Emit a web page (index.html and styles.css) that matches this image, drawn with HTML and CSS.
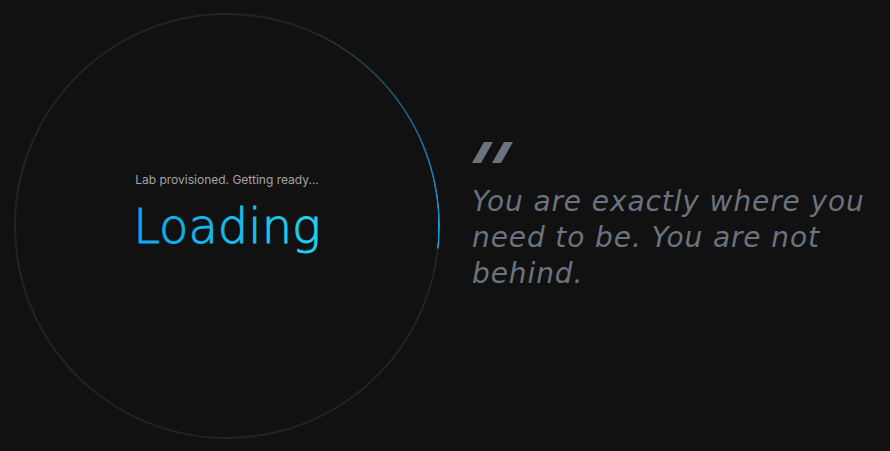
FILE: index.html
```html
<!DOCTYPE html>
<html lang="en">
<head>
<meta charset="utf-8">
<title>Loading</title>
<link rel="stylesheet" href="styles.css">
</head>
<body>
<main class="page">
  <section class="ring">
    <div class="center">
      <p class="status">Lab provisioned. Getting ready...</p>
      <svg class="loading" width="192" height="58" viewBox="0 0 192 58">
        <defs>
          <linearGradient id="lg" x1="0" y1="0" x2="1" y2="0">
            <stop offset="0" stop-color="#0ea5e9"/>
            <stop offset="1" stop-color="#22d3ee"/>
          </linearGradient>
        </defs>
        <text x="96" y="45" text-anchor="middle" class="loading-text">Loading</text>
      </svg>
    </div>
  </section>
  <section class="quote">
    <svg class="qmark" width="42" height="22" viewBox="0 0 42 22" aria-hidden="true">
      <polygon points="12,0 21,0 9,21 0,21" fill="#6b7280"/>
      <polygon points="32,0 41,0 29,21 20,21" fill="#6b7280"/>
    </svg>
    <p class="qtext">You are exactly where you need to be. You are not behind.</p>
  </section>
</main>
</body>
</html>
```

FILE: styles.css
```css
html, body {
  margin: 0;
  padding: 0;
  background: #111111;
}
.page {
  height: 451px;
  display: flex;
  align-items: center;
  padding-left: 14px;
  gap: 32px;
  box-sizing: border-box;
}
.ring {
  position: relative;
  flex: 0 0 auto;
  width: 426px;
  height: 426px;
  border-radius: 50%;
  border: 2px solid #232323;
  box-sizing: border-box;
  display: flex;
  align-items: center;
  justify-content: center;
}
.ring::before {
  content: "";
  position: absolute;
  inset: -2px;
  border-radius: 50%;
  background: conic-gradient(from 0deg, rgba(14,165,233,0) 0deg, rgba(14,165,233,0) 22deg, rgba(14,165,233,0.3) 45deg, #0ea5e9 96deg, rgba(14,165,233,0) 96.2deg);
  -webkit-mask: radial-gradient(farthest-side, transparent calc(100% - 2px), #000 calc(100% - 1.5px));
  mask: radial-gradient(farthest-side, transparent calc(100% - 2px), #000 calc(100% - 1.5px));
}
.center {
  display: flex;
  flex-direction: column;
  align-items: center;
  padding-bottom: 22px;
}
.status {
  margin: 0;
  font-family: Inter, "Liberation Sans", sans-serif;
  font-size: 12px;
  line-height: 14px;
  color: #a3a3a3;
}
.loading {
  display: block;
  margin-top: 11px;
  overflow: visible;
}
.loading-text {
  font-family: "DejaVu Sans", sans-serif;
  font-weight: 200;
  font-size: 48px;
  fill: url(#lg);
  stroke: url(#lg);
  stroke-width: 0.9px;
}
.quote {
  width: 400px;
  display: flex;
  flex-direction: column;
  margin-bottom: 17px;
}
.qmark {
  display: block;
}
.qtext {
  margin: 20px 0 0;
  font-family: "DejaVu Sans", sans-serif;
  font-style: italic;
  font-weight: 400;
  font-size: 28px;
  letter-spacing: 0.9px;
  line-height: 36px;
  color: #6b7280;
}
```
